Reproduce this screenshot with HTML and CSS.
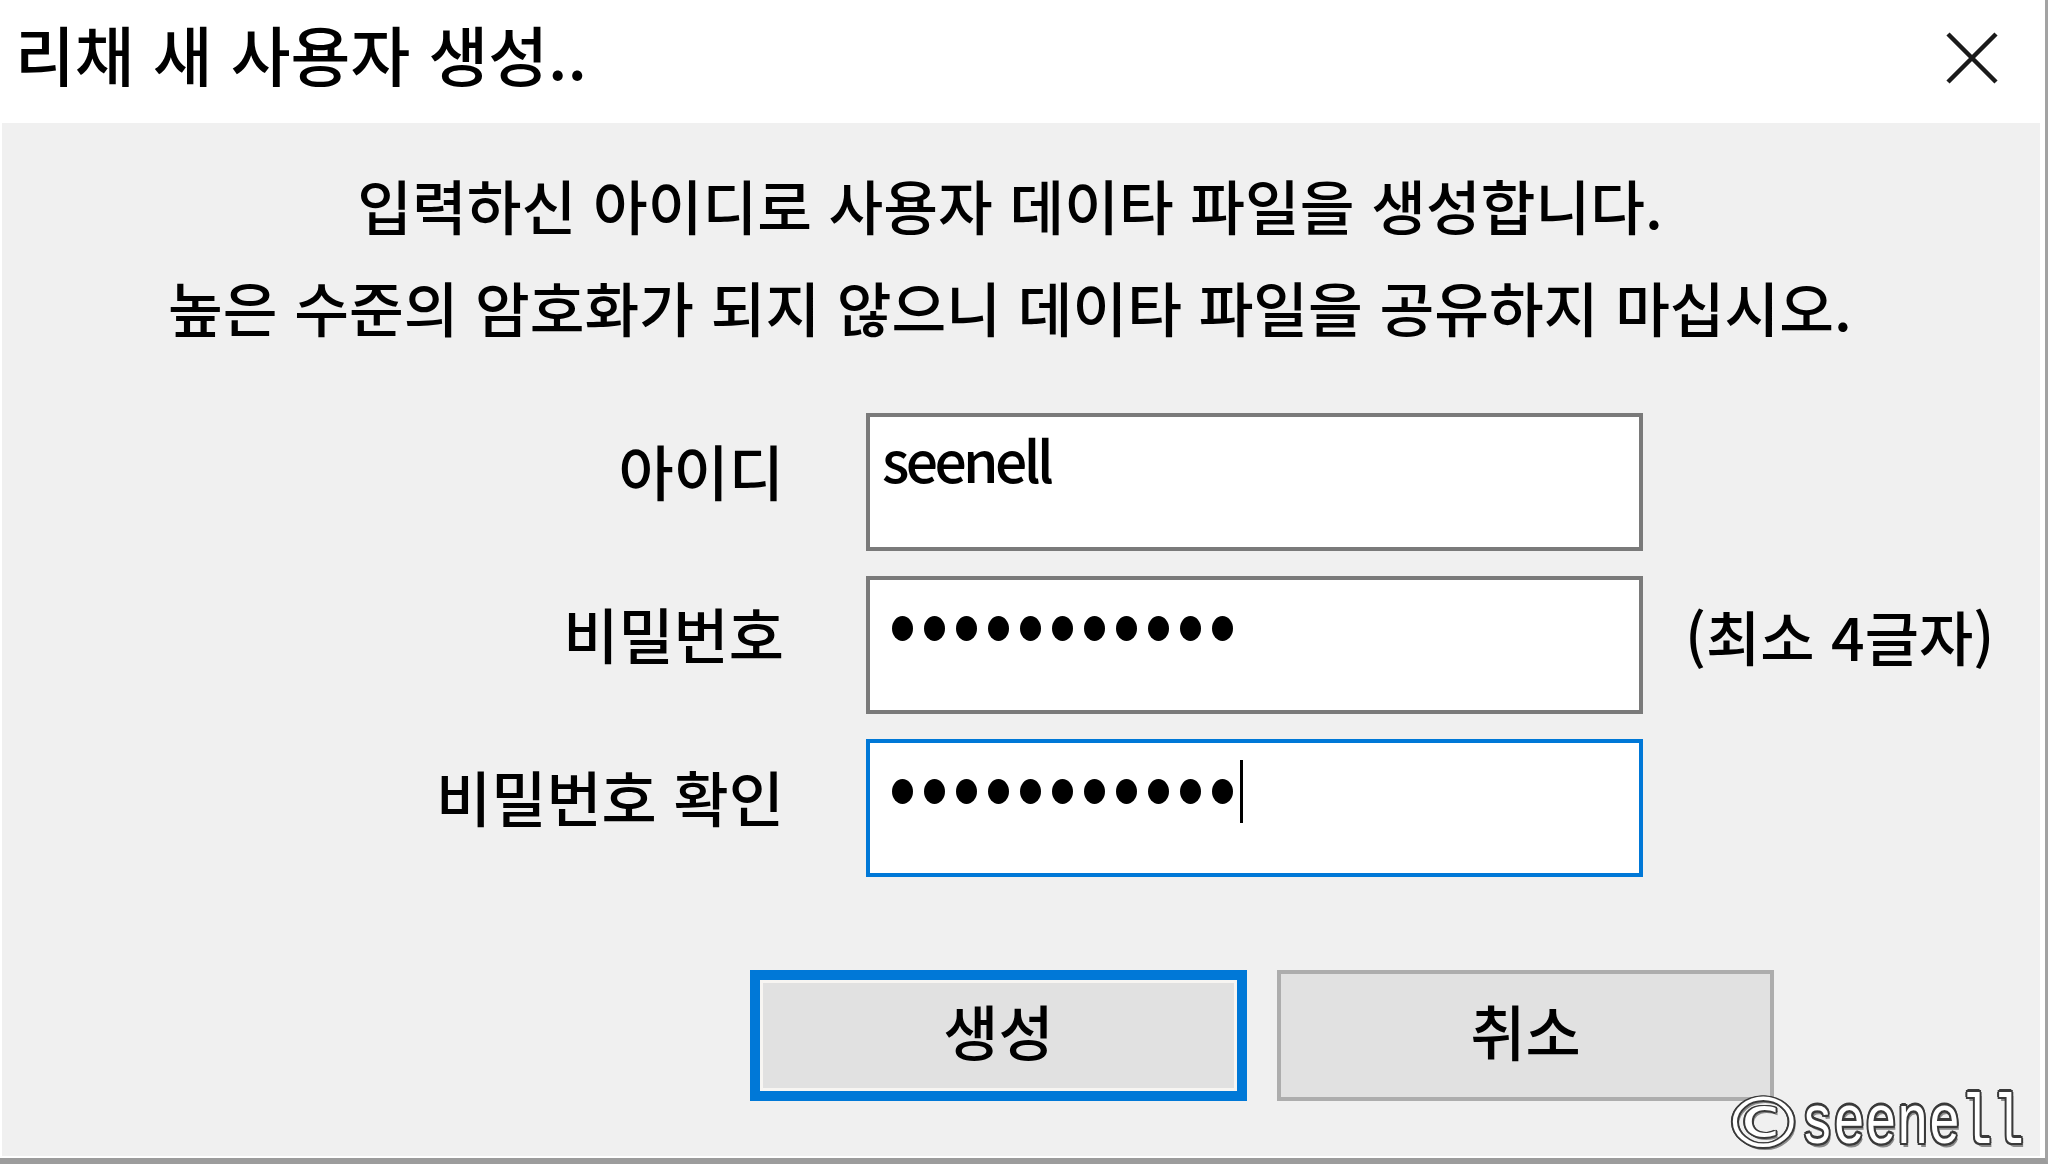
FILE: index.html
```html
<!DOCTYPE html>
<html lang="ko">
<head>
<meta charset="utf-8">
<title>리채 새 사용자 생성..</title>
<link rel="stylesheet" href="styles.css">
</head>
<body>
<div class="window">
  <div class="titlebar">
    <div class="title">리채 새 사용자 생성..</div>
    <svg class="close" width="52" height="52" viewBox="0 0 52 52" aria-label="닫기">
      <path d="M2 2 L50 50 M50 2 L2 50" stroke="#1a1a1a" stroke-width="4.5" fill="none"/>
    </svg>
  </div>
  <div class="client">
    <div class="message">
      <p>입력하신 아이디로 사용자 데이타 파일을 생성합니다.</p>
      <p>높은 수준의 암호화가 되지 않으니 데이타 파일을 공유하지 마십시오.</p>
    </div>
    <div class="form">
      <div class="label">아이디</div>
      <div class="field"><span class="value">seenell</span></div>
      <div class="hint"></div>

      <div class="label">비밀번호</div>
      <div class="field">
        <div class="dots">
          <span class="dot"></span><span class="dot"></span><span class="dot"></span><span class="dot"></span><span class="dot"></span><span class="dot"></span><span class="dot"></span><span class="dot"></span><span class="dot"></span><span class="dot"></span><span class="dot"></span>
        </div>
      </div>
      <div class="hint">(최소 4글자)</div>

      <div class="label">비밀번호 확인</div>
      <div class="field focused">
        <div class="dots">
          <span class="dot"></span><span class="dot"></span><span class="dot"></span><span class="dot"></span><span class="dot"></span><span class="dot"></span><span class="dot"></span><span class="dot"></span><span class="dot"></span><span class="dot"></span><span class="dot"></span><i class="caret"></i>
        </div>
      </div>
      <div class="hint"></div>
    </div>
    <div class="buttons">
      <div class="button default">생성</div>
      <div class="button">취소</div>
    </div>
  </div>
  <div class="watermark"><span class="copy">©</span><span class="wm-text">seenell</span></div>
</div>
</body>
</html>
```

FILE: styles.css
```css
html, body {
  margin: 0;
  padding: 0;
}

body {
  width: 2048px;
  height: 1164px;
  overflow: hidden;
  background: #ffffff;
  font-family: "Noto Sans CJK KR", "Noto Sans", sans-serif;
  font-weight: 500;
  color: #000000;
}

.window {
  position: relative;
  width: 2048px;
  height: 1164px;
  box-sizing: border-box;
  border-right: 3px solid #a3a3a3;
  border-bottom: 6px solid #9c9c9c;
  background: #ffffff;
  display: flex;
  flex-direction: column;
}

.titlebar {
  height: 123px;
  flex: none;
  display: flex;
  justify-content: space-between;
  align-items: flex-start;
  background: #ffffff;
}

.title {
  font-size: 65px;
  line-height: 62px;
  margin: 22px 0 0 15px;
  white-space: nowrap;
}

.close {
  margin: 32px 47px 0 0;
  display: block;
}

.client {
  flex: 1;
  margin: 0 5px 2px 2px;
  background: #f0f0f0;
  padding-top: 30px;
  box-sizing: border-box;
}

.message {
  text-align: center;
  font-size: 59.5px;
  line-height: 102px;
  padding-right: 22px;
}

.message p {
  margin: 0;
  white-space: nowrap;
}

.form {
  margin-top: 56px;
  display: grid;
  grid-template-columns: 864px 777px auto;
  grid-auto-rows: 138px;
  row-gap: 25px;
  align-items: center;
}

.label {
  font-size: 60px;
  line-height: 64px;
  text-align: right;
  padding-right: 82px;
  padding-bottom: 24px;
  white-space: nowrap;
}

.field {
  box-sizing: border-box;
  height: 138px;
  border: 4px solid #7a7a7a;
  background: #ffffff;
  padding: 9px 12px;
}

.field.focused {
  border-color: #0078d7;
}

.value {
  display: block;
  font-size: 57px;
  line-height: 64px;
  letter-spacing: -3.6px;
  white-space: nowrap;
}

.dots {
  height: 64px;
  margin: 7px 0 0 10px;
  display: flex;
  align-items: center;
}

.dot {
  width: 21px;
  height: 25px;
  border-radius: 50%;
  background: #000000;
  margin-right: 11px;
  flex: none;
}

.dots .dot:last-of-type {
  margin-right: 0;
}

.caret {
  display: block;
  width: 3px;
  height: 63px;
  background: #000000;
  margin-left: 7px;
  flex: none;
}

.hint {
  font-size: 59px;
  line-height: 64px;
  padding-left: 42px;
  padding-bottom: 18px;
  white-space: nowrap;
}

.buttons {
  margin-top: 93px;
  padding-left: 748px;
  display: flex;
  gap: 30px;
}

.button {
  box-sizing: border-box;
  width: 497px;
  height: 131px;
  background: #e1e1e1;
  border: 4px solid #adadad;
  display: flex;
  align-items: center;
  justify-content: center;
  font-size: 60px;
  line-height: 64px;
  padding-bottom: 11px;
}

.button.default {
  border: 10px solid #0078d7;
  box-shadow: inset 0 0 0 3px #f7f5f2;
}

.watermark {
  position: absolute;
  right: 21px;
  bottom: 10px;
  display: flex;
  align-items: flex-end;
  color: #ffffff;
  font-weight: 400;
  text-shadow:
    -2px 0 #3a3a3a, 2px 0 #3a3a3a, 0 -2px #3a3a3a, 0 2px #3a3a3a,
    -1.5px -1.5px #3a3a3a, 1.5px -1.5px #3a3a3a, -1.5px 1.5px #3a3a3a, 1.5px 1.5px #3a3a3a,
    2px 3px #8a8a8a;
}

.copy {
  display: block;
  font-family: "DejaVu Sans", sans-serif;
  font-size: 84px;
  line-height: 60px;
  transform: scaleY(0.82);
  transform-origin: bottom center;
  margin-right: -4px;
  margin-bottom: 0;
}

.wm-text {
  display: block;
  font-family: "Liberation Mono", monospace;
  font-size: 53px;
  line-height: 36px;
  transform: scaleY(1.33);
  transform-origin: bottom center;
}
```
